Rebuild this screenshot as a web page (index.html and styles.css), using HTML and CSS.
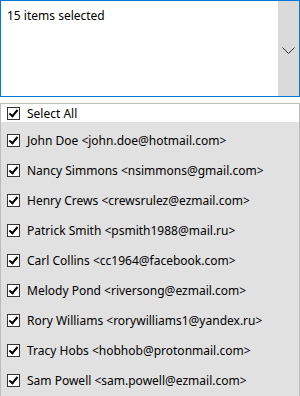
FILE: index.html
```html
<!DOCTYPE html>
<html lang="en">
<head>
    <meta charset="UTF-8">
    <title>Multi select</title>
    <link rel="stylesheet" href="styles.css">
</head>
<body>
    <div class="combo">
        <div class="combo-text">15 items selected</div>
        <div class="combo-button">
            <svg width="13" height="8" viewBox="0 0 13 8">
                <path d="M0.5 0.5 L6.5 6.5 L12.5 0.5" fill="none" stroke="#333" stroke-width="1"/>
            </svg>
        </div>
    </div>

    <div class="list">
        <label class="item select-all"><span class="box"></span>Select All</label>
        <label class="item"><span class="box"></span>John Doe &lt;john.doe@hotmail.com&gt;</label>
        <label class="item"><span class="box"></span>Nancy Simmons &lt;nsimmons@gmail.com&gt;</label>
        <label class="item"><span class="box"></span>Henry Crews &lt;crewsrulez@ezmail.com&gt;</label>
        <label class="item"><span class="box"></span>Patrick Smith &lt;psmith1988@mail.ru&gt;</label>
        <label class="item"><span class="box"></span>Carl Collins &lt;cc1964@facebook.com&gt;</label>
        <label class="item"><span class="box"></span>Melody Pond &lt;riversong@ezmail.com&gt;</label>
        <label class="item"><span class="box"></span>Rory Williams &lt;rorywilliams1@yandex.ru&gt;</label>
        <label class="item"><span class="box"></span>Tracy Hobs &lt;hobhob@protonmail.com&gt;</label>
        <label class="item"><span class="box"></span>Sam Powell &lt;sam.powell@ezmail.com&gt;</label>
    </div>
</body>
</html>
```

FILE: styles.css
```css
body {
    margin: 0;
    width: 300px;
    height: 396px;
    overflow: hidden;
    background: #ffffff;
    font-family: "Noto Sans", "Open Sans", sans-serif;
    font-size: 12px;
    color: #000;
}

.combo {
    display: flex;
    height: 97px;
    border: 1px solid #0078d7;
    box-sizing: border-box;
    background: #fff;
}

.combo-text {
    flex: 1;
    padding: 6px 6px;
}

.combo-button {
    width: 21px;
    background: #dadada;
    display: flex;
    align-items: center;
    justify-content: center;
    padding-top: 5px;
}

.list {
    margin-top: 6px;
    border: 1px solid #bcbcbc;
    border-bottom: none;
    background: #e1e1e1;
    height: 293px;
    box-sizing: border-box;
}

.item {
    display: flex;
    align-items: center;
    height: 30px;
    padding-left: 6px;
    white-space: nowrap;
}

.select-all {
    height: 18px;
    background: #fff;
    margin-bottom: 3px;
}

.box {
    width: 11px;
    height: 11px;
    border: 1px solid #333;
    background: #fff;
    margin-right: 7px;
    position: relative;
    flex: none;
}

.box::after {
    content: "";
    position: absolute;
    left: 3px;
    top: 0px;
    width: 3px;
    height: 7px;
    border-right: 2px solid #000;
    border-bottom: 2px solid #000;
    transform: rotate(40deg);
}
```
